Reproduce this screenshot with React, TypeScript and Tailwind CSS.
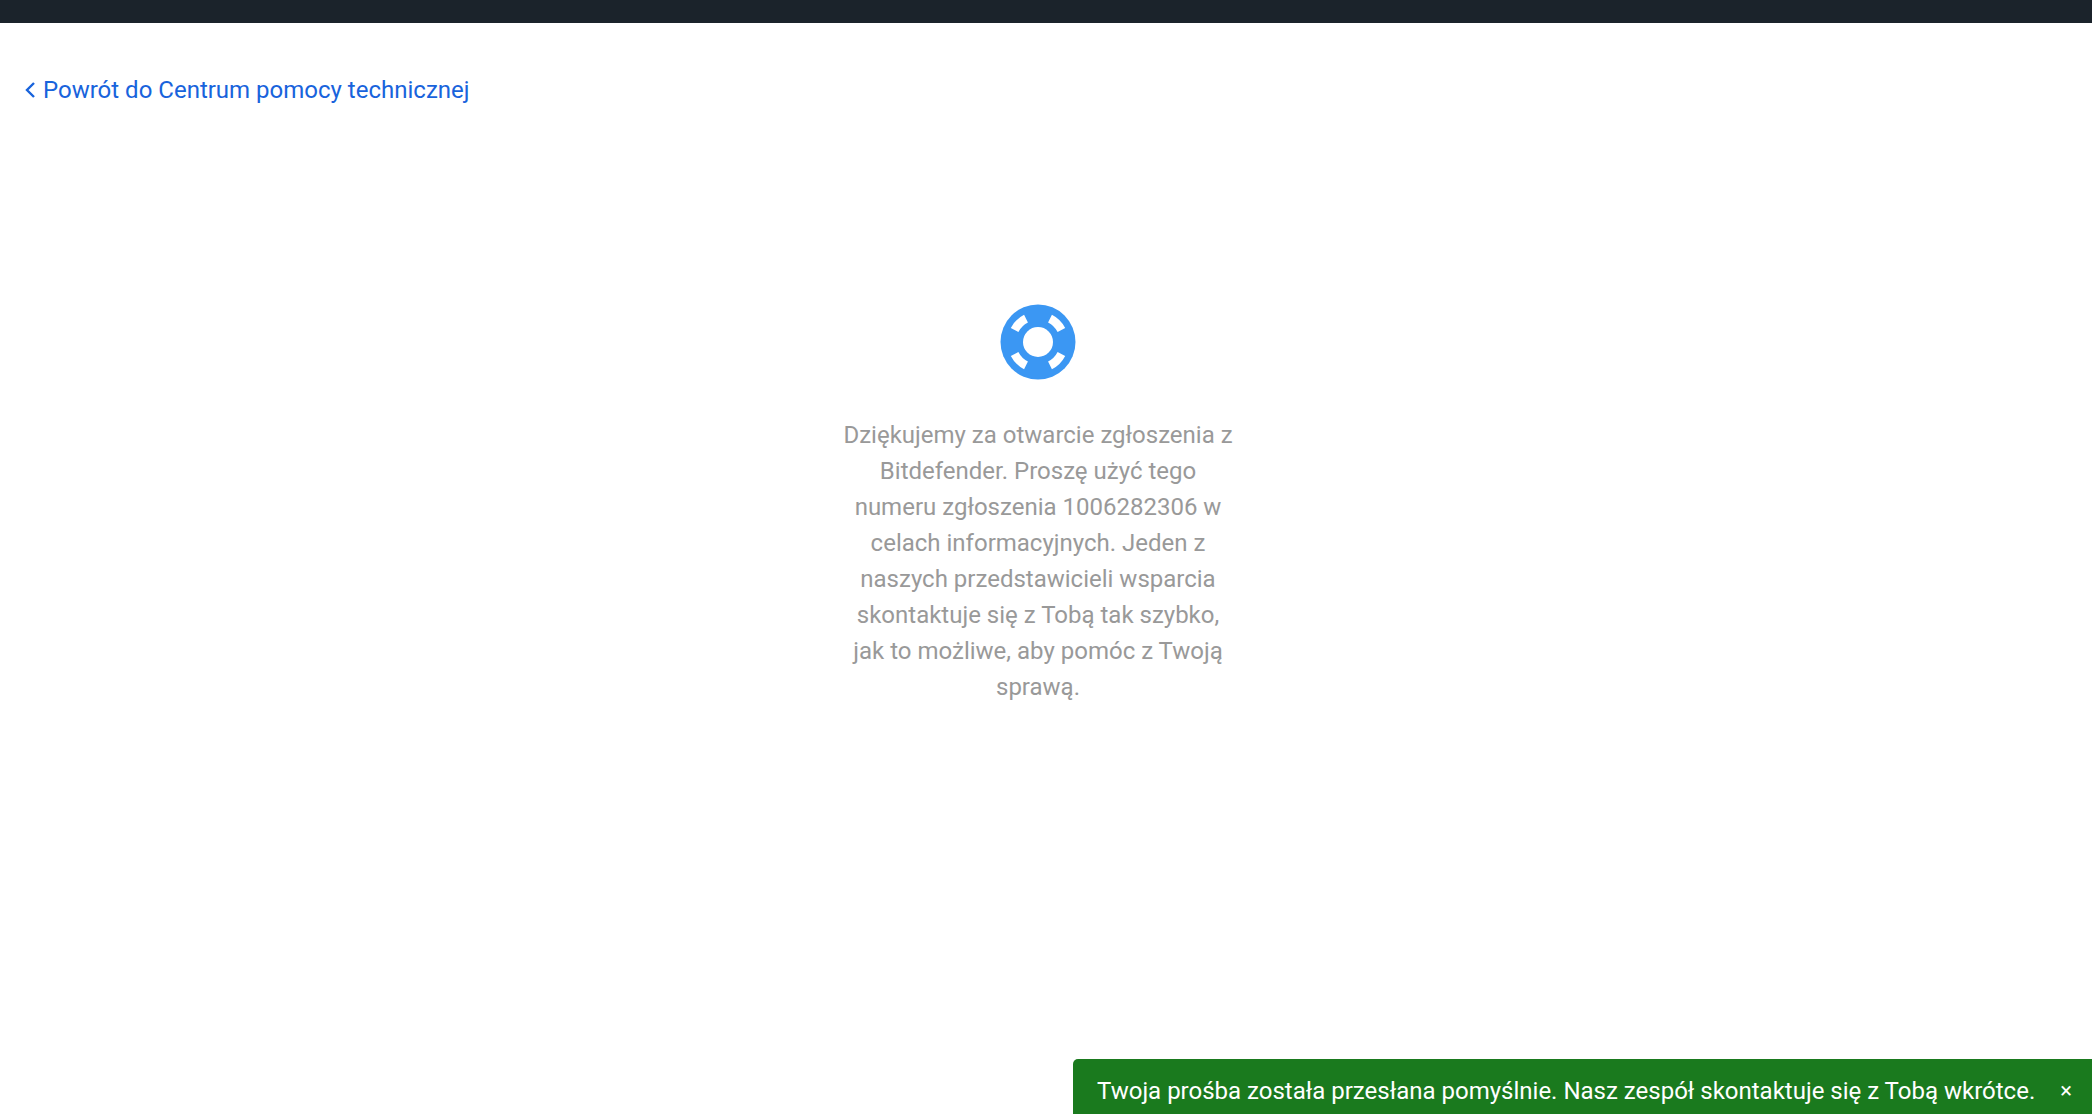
const LifeRing = () => (
  <svg width="76" height="76" viewBox="0 0 76 76" xmlns="http://www.w3.org/2000/svg">
    <circle cx="38" cy="38" r="37.5" fill="#3b97f3" />
    <circle cx="38" cy="38" r="15" fill="#fff" />
    <g fill="none" stroke="#fff" strokeWidth="8.5">
      <path d="M14.6 26A26 26 0 0 1 26 14.6" />
      <path d="M50 14.6A26 26 0 0 1 61.4 26" />
      <path d="M61.4 50A26 26 0 0 1 50 61.4" />
      <path d="M26 61.4A26 26 0 0 1 14.6 50" />
    </g>
  </svg>
);

export default function App() {
  return (
    <div className="relative h-[1114px] overflow-hidden bg-white font-['Roboto',sans-serif]">
      <div className="h-[23px] bg-[#1b232b]"></div>

      <a href="#" className="mt-[49px] ml-[24px] flex items-center gap-[7px] text-[24px] leading-[36px] text-[#1863dc]">
        <svg width="12" height="18" viewBox="0 0 12 18" fill="none" xmlns="http://www.w3.org/2000/svg">
          <path d="M10 2L3 9L10 16" stroke="#1863dc" strokeWidth="2.4" />
        </svg>
        <span>Powrót do Centrum pomocy technicznej</span>
      </a>

      <main className="mt-[196px] flex flex-col items-center pr-[16px]">
        <LifeRing />
        <p className="mt-[37px] w-[390px] text-center text-[24px] leading-[36px] text-[#999999]">
          Dziękujemy za otwarcie zgłoszenia z Bitdefender. Proszę użyć tego numeru zgłoszenia 1006282306 w celach informacyjnych. Jeden z naszych przedstawicieli wsparcia skontaktuje się z Tobą tak szybko, jak to możliwe, aby pomóc z Twoją sprawą.
        </p>
      </main>

      <div className="absolute right-0 bottom-0 flex h-[55px] w-[1019px] items-center justify-between rounded-tl-[5px] bg-[#1a7a1e] pt-[8px] pr-[20px] pl-[24px] text-[24px] text-white">
        <span>Twoja prośba została przesłana pomyślnie. Nasz zespół skontaktuje się z Tobą wkrótce.</span>
        <span className="text-[22px]">×</span>
      </div>
    </div>
  );
}
